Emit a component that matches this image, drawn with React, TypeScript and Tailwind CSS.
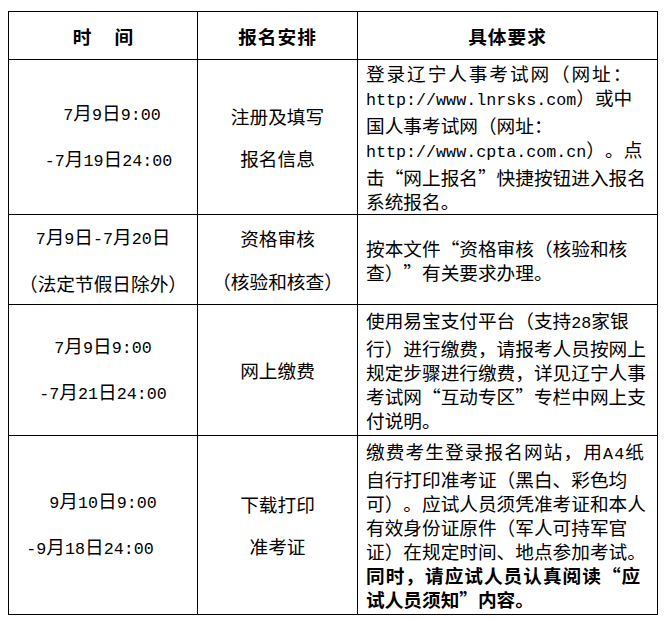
import React from "react";

// ASCII runs (digits, urls) go half-width mono, the rest stays CJK
function T({ s }: { s: string }) {
  const parts = s.split(/([\x21-\x7e]+)/);
  return (
    <>
      {parts.map((p, i) =>
        i % 2 ? (
          <span key={i} className="font-['Liberation_Mono',monospace] text-[16.7px]">
            {p}
          </span>
        ) : (
          <React.Fragment key={i}>{p}</React.Fragment>
        )
      )}
    </>
  );
}

const cell = "flex flex-col justify-center border-r border-b border-black";
const mid = cell + " items-center leading-[42.5px]";
const req = cell + " pl-[8px] leading-[24px]";

type Line = { s: string; c?: string };

function Lines({ lines }: { lines: Line[] }) {
  return (
    <>
      {lines.map((l, i) => (
        <div key={i} className={"whitespace-nowrap " + (l.c || "")}>
          <T s={l.s} />
        </div>
      ))}
    </>
  );
}

export default function App() {
  return (
    <div className="w-[667px] h-[620px] bg-white pt-[11px] pl-[8px] text-black text-[18.67px] [text-spacing-trim:space-all] font-['Noto_Sans_CJK_SC',sans-serif]">
      <div className="grid w-[650px] grid-cols-[189px_160px_300px] grid-rows-[48px_155px_90px_131px_179px] border-l border-t border-black">
        {/* header */}
        <div className={cell + " items-center font-bold"}>
          <div className="whitespace-nowrap">
            <span className="mr-[23px]">时</span>
            <span>间</span>
          </div>
        </div>
        <div className={cell + " items-center font-bold tracking-[1px]"}>报名安排</div>
        <div className={cell + " items-center font-bold tracking-[1px]"}>具体要求</div>

        {/* 注册 */}
        <div className={mid}>
          <Lines lines={[{ s: "7月9日9:00", c: "pl-[18px]" }, { s: "-7月19日24:00", c: "pl-[11px]" }]} />
        </div>
        <div className={mid}>
          <Lines lines={[{ s: "注册及填写" }, { s: "报名信息" }]} />
        </div>
        <div className={req}>
          <Lines
            lines={[
              { s: "登录辽宁人事考试网（网址：", c: "tracking-[1.9px]" },
              { s: "http://www.lnrsks.com）或中" },
              { s: "国人事考试网（网址：" },
              { s: "http://www.cpta.com.cn）。点" },
              { s: "击“网上报名”快捷按钮进入报名" },
              { s: "系统报名。" },
            ]}
          />
        </div>

        {/* 资格审核 */}
        <div className={mid}>
          <Lines lines={[{ s: "7月9日-7月20日" }, { s: "（法定节假日除外）" }]} />
        </div>
        <div className={mid}>
          <Lines lines={[{ s: "资格审核" }, { s: "（核验和核查）" }]} />
        </div>
        <div className={req}>
          <Lines lines={[{ s: "按本文件“资格审核（核验和核" }, { s: "查）”有关要求办理。" }]} />
        </div>

        {/* 缴费 */}
        <div className={mid}>
          <Lines lines={[{ s: "7月9日9:00" }, { s: "-7月21日24:00" }]} />
        </div>
        <div className={mid}>
          <Lines lines={[{ s: "网上缴费" }]} />
        </div>
        <div className={req}>
          <Lines
            lines={[
              { s: "使用易宝支付平台（支持28家银" },
              { s: "行）进行缴费，请报考人员按网上" },
              { s: "规定步骤进行缴费，详见辽宁人事" },
              { s: "考试网“互动专区”专栏中网上支" },
              { s: "付说明。" },
            ]}
          />
        </div>

        {/* 准考证 */}
        <div className={mid}>
          <Lines lines={[{ s: "9月10日9:00" }, { s: "-9月18日24:00", c: "pr-[26px]" }]} />
        </div>
        <div className={mid}>
          <Lines lines={[{ s: "下载打印" }, { s: "准考证" }]} />
        </div>
        <div className={req}>
          <Lines
            lines={[
              { s: "缴费考生登录报名网站，用A4纸", c: "tracking-[1.1px]" },
              { s: "自行打印准考证（黑白、彩色均" },
              { s: "可）。应试人员须凭准考证和本人" },
              { s: "有效身份证原件（军人可持军官" },
              { s: "证）在规定时间、地点参加考试。" },
              { s: "同时，请应试人员认真阅读“应", c: "font-bold tracking-[1px]" },
              { s: "试人员须知”内容。", c: "font-bold" },
            ]}
          />
        </div>
      </div>
    </div>
  );
}
